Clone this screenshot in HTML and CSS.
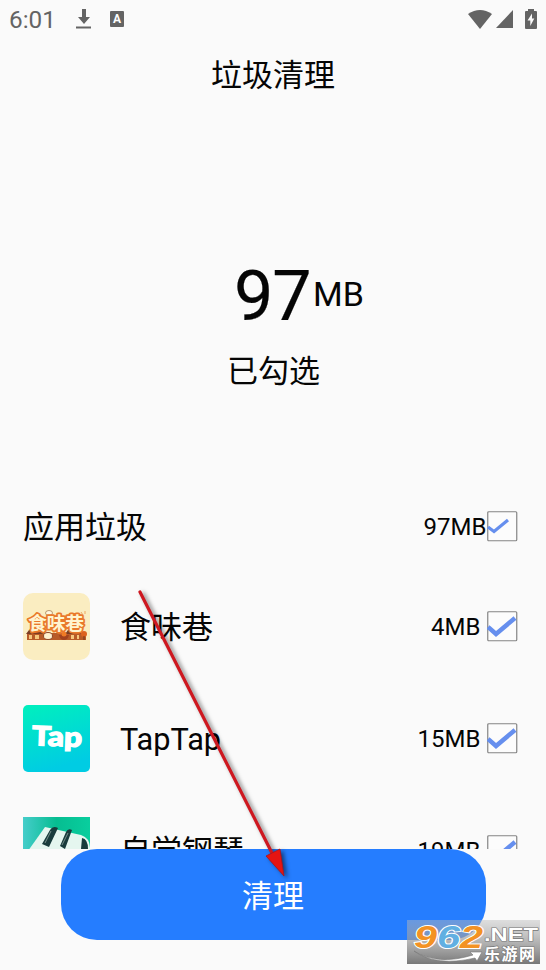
FILE: index.html
```html
<!DOCTYPE html>
<html lang="zh-CN">
<head>
<meta charset="utf-8">
<title>垃圾清理</title>
<link rel="stylesheet" href="styles.css">
</head>
<body>
<div class="screen">
  <header class="status">
    <span class="time">6:01</span>
    <svg class="download" width="16" height="20" viewBox="0 0 16 20"><path d="M6 0h4v8h4l-6 7-6-7h4zM0 17.500h15v2H0z"/></svg>
    <span class="input">A</span>
    <span class="grow"></span>
    <svg class="wifi" width="24" height="19" viewBox="0 0 24 19"><path d="M0 4Q12-4 24 4L12 19z"/></svg>
    <svg class="signal" width="17" height="18" viewBox="0 0 17 18"><path d="M17 0v18H0z"/></svg>
    <svg class="battery" width="12" height="20" viewBox="0 0 12 20"><path fill-rule="evenodd" d="M3 0h6v2h2q1 0 1 1v16q0 1-1 1H1q-1 0-1-1V3q0-1 1-1h2zM7 4.500l-4.500 7h2.800v5.500l4-7.500H7z"/></svg>
  </header>
  <h1 class="title">垃圾清理</h1>
  <section class="summary">
    <div class="total"><span class="number">97</span><span class="unit">MB</span></div>
    <div class="selected">已勾选</div>
  </section>
  <main class="list">
    <div class="row heading">
      <span class="name">应用垃圾</span><span class="size">97MB</span>
      <svg class="check" viewBox="0 0 31 31"><rect class="box" x=".75" y=".75" width="29" height="29" rx="1"/><path class="tick small" d="M1 16l6 4.500L21 9"/></svg>
    </div>
    <div class="row">
      <svg class="app" viewBox="0 0 67 67">
        <rect width="67" height="67" rx="10" fill="#faedc1"/>
        <path d="M4 40h59v7H4z" fill="#b85b27"/>
        <path d="M3 41l3-4h13l3 4zm39 0 3-4h11l3 4z" fill="#7b3c22"/>
        <path d="M6 42h3v4H6zm6 0h4v4h-4zm36 0h3v4h-3zm6 0h2v4h-2z" fill="#f6c77d"/>
        <ellipse cx="26" cy="20" rx="3.500" ry="2.500" fill="#fff8df" stroke="#9a7045" stroke-width=".7"/>
        <text x="5" y="37" class="food-logo" textLength="56" lengthAdjust="spacingAndGlyphs">食味巷</text>
        <ellipse cx="25" cy="43" rx="4.500" ry="3.500" fill="#fff1cf" stroke="#8e4827"/>
        <path d="M36 42h10q-1 5-5 5t-5-5" fill="#a3421d"/><circle cx="41" cy="41" r="2.500" fill="#ef7b25"/>
        <circle cx="61" cy="41" r="3" fill="#dc621f"/><path d="M61 43v4" stroke="#74371c"/>
        <path d="M58 19l2 3m2-4v3" stroke="#e88b3a" stroke-width=".7"/>
      </svg>
      <span class="name">食味巷</span><span class="size">4MB</span>
      <svg class="check" viewBox="0 0 31 31"><rect class="box" x=".75" y=".75" width="29" height="29" rx="1"/><path class="tick" d="M1 16l8 7L28 7"/></svg>
    </div>
    <div class="row">
      <svg class="app" viewBox="0 0 67 67">
        <defs><linearGradient id="mint" x1="0" y1="0" x2=".3" y2="1"><stop stop-color="#00f0bd"/><stop offset="1" stop-color="#00cce3"/></linearGradient></defs>
        <rect width="67" height="67" rx="5" fill="url(#mint)"/>
        <text x="9" y="41" class="tap-logo" textLength="50" lengthAdjust="spacingAndGlyphs" transform="rotate(2 33 34)">Tap</text>
      </svg>
      <span class="name latin">TapTap</span><span class="size">15MB</span>
      <svg class="check" viewBox="0 0 31 31"><rect class="box" x=".75" y=".75" width="29" height="29" rx="1"/><path class="tick" d="M1 16l8 7L28 7"/></svg>
    </div>
    <div class="row">
      <svg class="app" viewBox="0 0 67 67">
        <defs><linearGradient id="green"><stop stop-color="#45cdca"/><stop offset=".5" stop-color="#06bd91"/><stop offset="1" stop-color="#09ce9e"/></linearGradient></defs>
        <rect width="67" height="67" fill="url(#green)"/>
        <path d="M22 10 0 41v26h67V31q0-10-9-13z" fill="#e5f6ef"/>
        <path d="M19 27l8-14q3-5 8-2l-9 19zm18 2 6-14q2-4 6-2l-7 19zm21 3 1-11q6 1 6 11z" fill="#193c3c"/>
        <path d="m22 26 6-12m11 14 6-12" stroke="#778f8a"/>
      </svg>
      <span class="name">自学钢琴</span><span class="size">19MB</span>
      <svg class="check" viewBox="0 0 31 31"><rect class="box" x=".75" y=".75" width="29" height="29" rx="1"/><path class="tick" d="M1 16l8 7L28 7"/></svg>
    </div>
  </main>
  <button class="clean">清理</button>
  <svg class="pointer" width="160" height="300" viewBox="130 585 160 300">
    <path class="shaft" d="M140 592 273 855"/>
    <path d="M266 856 280 849 284 876z" fill="#e51412" stroke="#a9141b" stroke-width=".8"/>
  </svg>
  <svg class="watermark" width="133" height="44" viewBox="0 0 133 44">
    <defs><linearGradient id="shade" x1="0" y1="0" x2="0" y2="1"><stop stop-color="#bbb" stop-opacity=".45"/><stop offset="1" stop-color="#777"/></linearGradient></defs>
    <rect width="133" height="44" fill="url(#shade)"/>
    <text class="digits" x="7" y="28" textLength="69" lengthAdjust="spacingAndGlyphs"><tspan fill="#f39224">9</tspan><tspan fill="#61afe2">6</tspan><tspan fill="#f39224">2</tspan></text>
    <text class="net" x="77" y="21" textLength="54" lengthAdjust="spacingAndGlyphs">.NET</text>
    <text class="site" x="77" y="40" textLength="51">乐游网</text>
    <path d="M7 31Q30 46 66 35L63 32 75 32 70 41 68 38Q29 47 7 31z" fill="#fff" stroke="#777" stroke-width=".6"/>
  </svg>
</div>
</body>
</html>
```
FILE: styles.css
```css
* { box-sizing: border-box; }
body { margin: 0; background: #fafafa; }
.screen {
  position: relative;
  display: flex;
  flex-direction: column;
  width: 546px;
  height: 970px;
  overflow: hidden;
  color: #050505;
  background: #fafafa;
  font-family: Roboto, "Noto Sans CJK SC", sans-serif;
}
.status { display: flex; align-items: center; height: 38px; padding: 0 9px; color: #646464; fill: #646464; }
.time { width: 67px; font-size: 24.300px; }
.input { width: 14px; height: 16px; margin-left: 18px; border-radius: 1px; background: #646464; color: #fff; font-size: 12px; font-weight: 700; line-height: 16px; text-align: center; }
.grow { flex: 1; }
.signal { margin-left: 4px; }
.battery { margin-left: 12px; }
.title { height: 74px; margin: 0; padding-top: 1px; text-align: center; font-size: 31px; font-weight: 400; line-height: 74px; }
.summary { height: 364px; padding-top: 144px; }
.total { display: flex; align-items: flex-start; height: 80px; padding-left: 234px; line-height: 80px; }
.number { width: 79px; font-size: 70px; letter-spacing: -1px; -webkit-text-stroke: .2px #050505; }
.unit { font-size: 34px; line-height: 77px; }
.selected { width: 546px; height: 70px; padding-left: 1px; text-align: center; font-size: 31px; line-height: 72px; }
.list { height: 373px; overflow: hidden; }
.row { display: flex; align-items: center; height: 112px; padding: 0 28.500px 0 23px; }
.heading { height: 94px; padding-top: 6px; }
.app { width: 67px; height: 67px; margin-right: 30px; flex: none; }
.name { flex: 1; padding-top: 3px; font-size: 31px; line-height: 46px; }
.latin { font-size: 30.700px; }
.size { padding-top: 2px; margin-right: 6px; font-size: 24px; }
.heading .size { margin-right: 0; }
.check { width: 31px; height: 31px; flex: none; }
.box { fill: #fcfcfc; stroke: #858585; stroke-width: 1.2; }
.tick { fill: none; stroke: #668fee; stroke-width: 4.500; }
.tick.small { stroke-width: 3.200; }
.clean {
  width: 425px;
  height: 91px;
  margin: 0 0 0 60.500px;
  padding: 0 0 2px;
  border: 0;
  border-radius: 36px;
  color: #fff;
  background: #257dff;
  font: 400 31px/89px "Noto Sans CJK SC", sans-serif;
}
.food-logo { font: 700 18px "Noto Sans CJK SC", sans-serif; fill: #fff4d0; stroke: #e9792b; stroke-width: 3.500px; paint-order: stroke; stroke-linejoin: round; }
.tap-logo { font: 900 27px Lato, sans-serif; fill: #fff; stroke: #fff; stroke-width: 1.200px; }
.pointer { position: absolute; left: 130px; top: 585px; filter: drop-shadow(3px 2px 2px rgba(0, 0, 0, .5)); }
.shaft { fill: none; stroke: #ce1820; stroke-width: 3.200; stroke-linecap: round; }
.watermark { position: absolute; left: 407px; top: 920px; }
.digits { font: italic 700 32px "Liberation Sans", sans-serif; stroke: #fff; stroke-width: 2px; paint-order: stroke; }
.net, .site { fill: #fff; stroke: #777; stroke-width: 1.200px; paint-order: stroke; }
.net { font: 700 19px "Liberation Sans", sans-serif; }
.site { font: 700 16px "Noto Sans CJK SC", sans-serif; }
```
